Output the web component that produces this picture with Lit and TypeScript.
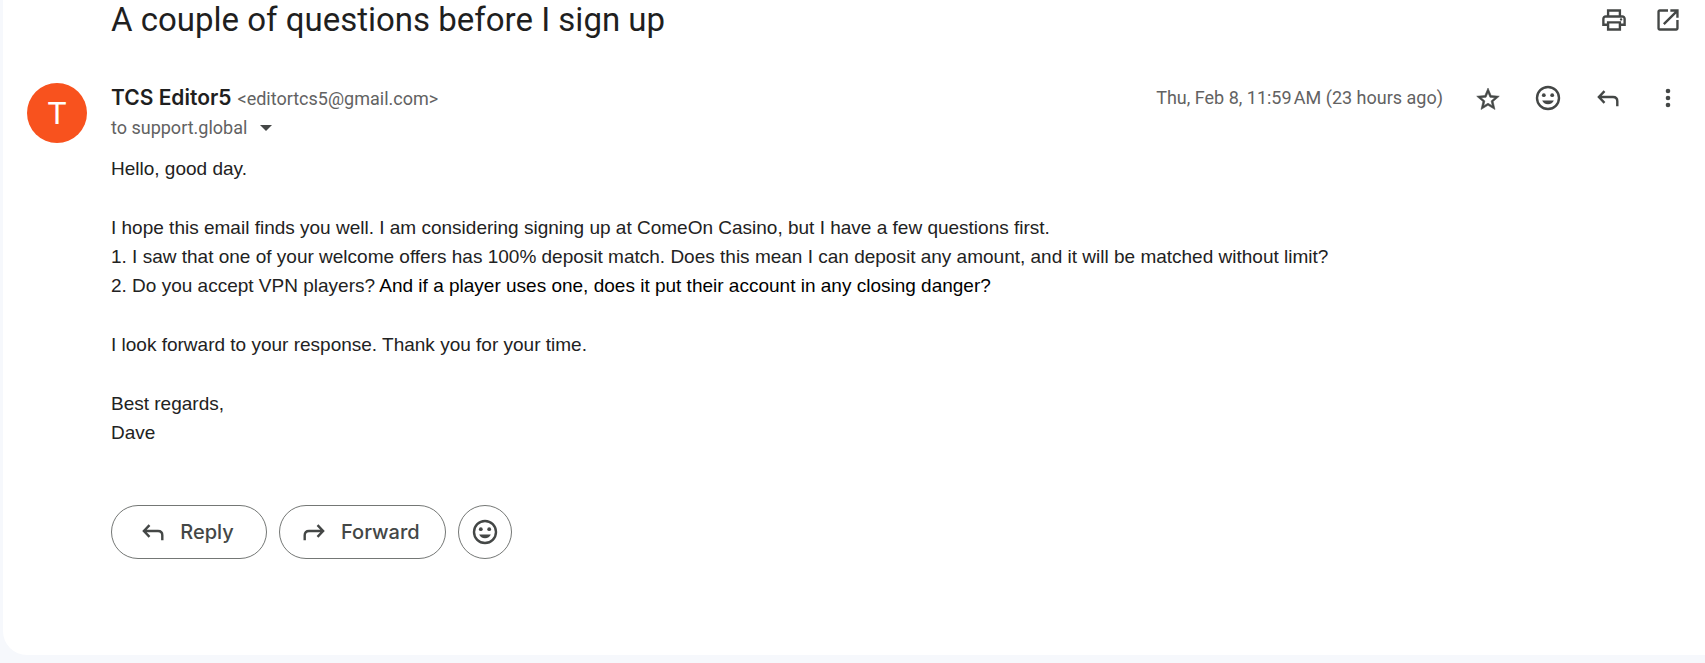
import { LitElement, html, svg, css } from 'lit';
import { customElement, property } from 'lit/decorators.js';

const TIGHT = '-0.7 -0.7 25.4 25.4';
const BOX = '0 0 30 30';

const icons: Record<string, { box: string; shape: unknown }> = {
  print: {
    box: TIGHT,
    shape: svg`<path d="M19 8h-1V3H6v5H5c-1.66 0-3 1.34-3 3v6h4v4h12v-4h4v-6c0-1.66-1.34-3-3-3zM8 5h8v3H8V5zm8 12v2H8v-4h8v2zm2-2v-2H6v2H4v-4c0-.55.45-1 1-1h14c.55 0 1 .45 1 1v4h-2z"/><circle cx="18" cy="11.5" r="1"/>`,
  },
  open: {
    box: TIGHT,
    shape: svg`<path d="M19 19H5V5h7V3H5c-1.11 0-2 .9-2 2v14c0 1.1.89 2 2 2h14c1.1 0 2-.9 2-2v-7h-2v7zM14 3v2h3.59l-9.83 9.83 1.41 1.41L19 6.41V10h2V3h-7z"/>`,
  },
  star: {
    box: '-1.3 -2.5 26.6 26.6',
    shape: svg`<path stroke="currentColor" stroke-width=".5" d="M22 9.24l-7.19-.62L12 2 9.19 8.63 2 9.24l5.46 4.73L5.82 21 12 17.27 18.18 21l-1.63-7.03L22 9.24zM12 15.4l-3.76 2.27 1-4.28-3.32-2.88 4.38-.38L12 6.1l1.71 4.04 4.38.38-3.32 2.88 1 4.28L12 15.4z"/>`,
  },
  smile: {
    box: BOX,
    shape: svg`<circle cx="15" cy="15" r="11" fill="none" stroke="currentColor" stroke-width="2.4"/><circle cx="10.8" cy="12.2" r="1.9"/><circle cx="19.2" cy="12.2" r="1.9"/><path d="M9.2 17.4h11.6c-.8 2.3-3 3.9-5.8 3.9s-5-1.6-5.8-3.9z"/>`,
  },
  reply: {
    box: BOX,
    shape: svg`<path d="M11.5 8.2L5.9 14l5.6 5.8M6 14h14q4.3 0 4.3 4.3v4.9" fill="none" stroke="currentColor" stroke-width="2.4"/>`,
  },
  forward: {
    box: BOX,
    shape: svg`<path d="M18.5 8.2l5.6 5.8-5.6 5.8M24 14H10q-4.3 0-4.3 4.3v4.9" fill="none" stroke="currentColor" stroke-width="2.4"/>`,
  },
  more: {
    box: BOX,
    shape: svg`<circle cx="15" cy="8" r="2.3"/><circle cx="15" cy="15" r="2.3"/><circle cx="15" cy="22" r="2.3"/>`,
  },
};

@customElement('mail-icon')
export class MailIcon extends LitElement {
  @property() name = 'more';
  static styles = css`
    :host { display: block; flex: none; width: 30px; height: 30px; }
    .glyph { display: block; width: 100%; height: 100%; fill: currentColor; }
  `;
  render() {
    const icon = icons[this.name];
    return html`<svg class="glyph" viewBox=${icon.box} aria-hidden="true">${icon.shape}</svg>`;
  }
}

@customElement('app-root')
export class AppRoot extends LitElement {
  static styles = css`
    :host {
      display: flex;
      box-sizing: border-box;
      min-height: 100vh;
      padding: 0 0 8px 3px;
      background: #f6f8fc;
      color: #1f1f1f;
      font-family: Roboto, Arial, sans-serif;
      font-size: 18px;
    }
    .card {
      flex: 1;
      min-width: 0;
      background: #fff;
      border-bottom-left-radius: 24px;
      padding: 0 22px 48px 24px;
    }
    button {
      font: inherit;
      color: #444746;
      background: none;
      border: 0;
      padding: 0;
      cursor: pointer;
    }
    .subject {
      display: flex;
      align-items: center;
      justify-content: space-between;
      padding-left: 84px;
    }
    .title { margin: 0; font-size: 33px; line-height: 40px; font-weight: 400; }
    .tools { display: flex; gap: 24px; }
    .message {
      display: grid;
      grid-template-columns: 60px minmax(0, 1fr);
      column-gap: 24px;
      margin-top: 43px;
    }
    .avatar {
      width: 60px;
      height: 60px;
      border-radius: 50%;
      background: #f8521e;
      color: #fff;
      font-size: 32px;
      line-height: 60px;
      text-align: center;
    }
    .meta { display: flex; justify-content: space-between; gap: 24px; }
    .sender { display: flex; align-items: baseline; gap: 6px; line-height: 24px; }
    .name { margin: 0; font: 600 21px/30px Inter, sans-serif; }
    .muted { color: #626262; }
    .actions { display: flex; align-items: center; gap: 30px; line-height: 24px; }
    .recipient { display: flex; align-items: center; gap: 13px; line-height: 30px; color: #626262; }
    .caret { display: block; width: 12px; height: 6px; fill: #444746; }
    .body {
      margin-top: 11px;
      font-family: "Liberation Sans", Arial, sans-serif;
      font-size: 19px;
      line-height: 29px;
      color: #222;
    }
    .para { margin: 0 0 30px; }
    .dark { color: #000; }
    .replies { display: flex; gap: 12px; margin-top: 58px; }
    .pill {
      box-sizing: border-box;
      display: flex;
      align-items: center;
      justify-content: center;
      gap: 12px;
      height: 54px;
      min-width: 156px;
      padding: 0 25px 0 19px;
      border: 1px solid #747775;
      border-radius: 27px;
      font: 500 20px/30px Inter, sans-serif;
    }
    .round { min-width: 0; width: 54px; padding: 0; }
  `;

  private tool(name: string, label: string) {
    return html`<button aria-label=${label}><mail-icon name=${name}></mail-icon></button>`;
  }

  render() {
    return html`
      <main class="card">
        <header class="subject">
          <h1 class="title">A couple of questions before I sign up</h1>
          <div class="tools">
            ${this.tool('print', 'Print')}${this.tool('open', 'Open in new window')}
          </div>
        </header>
        <article class="message">
          <div class="avatar" aria-hidden="true">T</div>
          <div>
            <div class="meta">
              <div class="sender">
                <h2 class="name">TCS Editor5</h2>
                <span class="muted">&lt;editortcs5@gmail.com&gt;</span>
              </div>
              <div class="actions">
                <time class="muted">Thu, Feb 8, 11:59\u202fAM (23 hours ago)</time>
                ${this.tool('star', 'Star')}${this.tool('smile', 'Add reaction')}
                ${this.tool('reply', 'Reply')}${this.tool('more', 'More')}
              </div>
            </div>
            <div class="recipient">
              <span>to support.global</span>
              <button aria-label="Show details">
                <svg class="caret" viewBox="0 0 12 6" aria-hidden="true"><path d="M0 0h12L6 6z"/></svg>
              </button>
            </div>
            <div class="body">
              <p class="para">Hello, good day.</p>
              <p class="para">
                I hope this email finds you well. I am considering signing up at ComeOn Casino, but I have a few questions first.<br />
                1. I saw that one of your welcome offers has 100% deposit match. Does this mean I can deposit any amount, and it will be matched without limit?<br />
                2. Do you accept VPN players? <span class="dark">And if a player uses one, does it put their account in any closing danger?</span>
              </p>
              <p class="para">I look forward to your response. Thank you for your time.</p>
              <p class="para">Best regards,<br />Dave</p>
            </div>
            <div class="replies">
              <button class="pill"><mail-icon name="reply"></mail-icon>Reply</button>
              <button class="pill"><mail-icon name="forward"></mail-icon>Forward</button>
              <button class="pill round" aria-label="Add reaction"><mail-icon name="smile"></mail-icon></button>
            </div>
          </div>
        </article>
      </main>
    `;
  }
}
